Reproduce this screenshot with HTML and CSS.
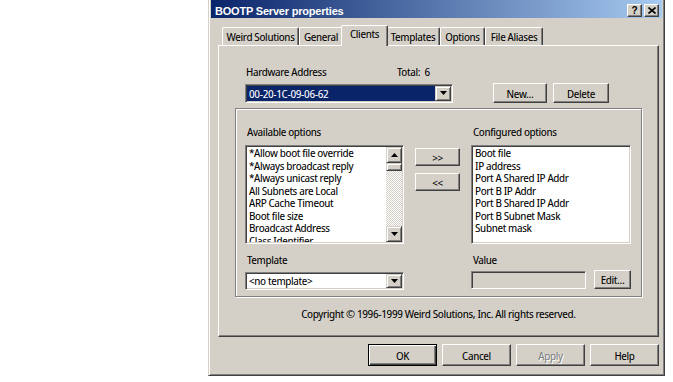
FILE: index.html
```html
<!DOCTYPE html>
<html>
<head>
<meta charset="utf-8">
<link rel="stylesheet" href="styles.css">
</head>
<body>
<div class="dialog">
  <div class="titlebar">
    <span class="title">BOOTP Server properties</span>
    <div class="caption-btns">
      <span class="cbtn help">?</span>
      <span class="cbtn close"><svg width="8" height="7" viewBox="0 0 8 7"><path d="M0.5 0.5L7.5 6.5M7.5 0.5L0.5 6.5" stroke="#000" stroke-width="1.6"/></svg></span>
    </div>
  </div>
  <div class="tabs">
    <span class="tab t-weird">Weird Solutions</span>
    <span class="tab t-general">General</span>
    <span class="tab t-clients active">Clients</span>
    <span class="tab t-templates">Templates</span>
    <span class="tab t-options">Options</span>
    <span class="tab t-aliases">File Aliases</span>
  </div>
  <div class="panel">
    <div class="hw">
      <div class="hw-labels"><span class="hw-label">Hardware Address</span><span>Total:&nbsp; 6</span></div>
      <div class="hw-controls">
        <div class="combo hw-combo">
          <span class="combo-text selected">00-20-1C-09-06-62</span>
          <span class="dropbtn"><svg width="7" height="4" viewBox="0 0 7 4"><path d="M0 0h7L3.5 4z"/></svg></span>
        </div>
        <button class="btn new">New...</button>
        <button class="btn delete">Delete</button>
      </div>
    </div>
    <div class="group">
      <div class="opts-row">
        <div class="col">
          <div class="label">Available options</div>
          <div class="listbox avail">
            <ul class="items">
              <li>*Allow boot file override</li>
              <li>*Always broadcast reply</li>
              <li>*Always unicast reply</li>
              <li>All Subnets are Local</li>
              <li>ARP Cache Timeout</li>
              <li>Boot file size</li>
              <li>Broadcast Address</li>
              <li>Class Identifier</li>
            </ul>
            <div class="scrollbar">
              <span class="sbtn"><svg width="7" height="4" viewBox="0 0 7 4"><path d="M0 4h7L3.5 0z"/></svg></span>
              <span class="thumb"></span>
              <span class="track"></span>
              <span class="sbtn"><svg width="7" height="4" viewBox="0 0 7 4"><path d="M0 0h7L3.5 4z"/></svg></span>
            </div>
          </div>
        </div>
        <div class="move">
          <button class="btn mbtn">&gt;&gt;</button>
          <button class="btn mbtn">&lt;&lt;</button>
        </div>
        <div class="col conf-col">
          <div class="label">Configured options</div>
          <div class="listbox conf">
            <ul class="items">
              <li>Boot file</li>
              <li>IP address</li>
              <li>Port A Shared IP Addr</li>
              <li>Port B IP Addr</li>
              <li>Port B Shared IP Addr</li>
              <li>Port B Subnet Mask</li>
              <li>Subnet mask</li>
            </ul>
          </div>
        </div>
      </div>
      <div class="fields-row">
        <div class="col">
          <div class="label">Template</div>
          <div class="combo tmpl-combo">
            <span class="combo-text">&lt;no template&gt;</span>
            <span class="dropbtn"><svg width="7" height="4" viewBox="0 0 7 4"><path d="M0 0h7L3.5 4z"/></svg></span>
          </div>
        </div>
        <div class="col value-col">
          <div class="label">Value</div>
          <div class="value-ctrls">
            <div class="edit-field"></div>
            <button class="btn edit-btn">Edit...</button>
          </div>
        </div>
      </div>
    </div>
    <div class="copyright">Copyright © 1996-1999 Weird Solutions, Inc. All rights reserved.</div>
  </div>
  <div class="buttons">
    <button class="btn dbtn default">OK</button>
    <button class="btn dbtn">Cancel</button>
    <button class="btn dbtn disabled">Apply</button>
    <button class="btn dbtn">Help</button>
  </div>
</div>
</body>
</html>
```

FILE: styles.css
```css
* { box-sizing: border-box; }

body {
  margin: 0;
  background: #fff;
  font-family: "Noto Sans Display", "Liberation Sans", Arial, sans-serif;
  font-stretch: 75%;
  font-size: 11.5px;
  letter-spacing: -0.35px;
  color: #000;
}

.dialog {
  margin-left: 208px;
  width: 457px;
  height: 376px;
  background: #d4d0c8;
  border-left: 1px solid #d4d0c8;
  border-right: 1px solid #404040;
  border-bottom: 1px solid #404040;
  box-shadow: inset 1px 0 #fff, inset -1px -1px #808080;
  padding: 0 2px 2px 2px;
}

.titlebar {
  height: 18px;
  display: flex;
  align-items: flex-start;
  justify-content: space-between;
  padding: 4px 3px 0 4px;
  background: linear-gradient(to right, #0a246a, #a6caf0);
}

.title {
  font-family: "Liberation Sans", Arial, sans-serif;
  font-stretch: normal;
  font-weight: bold;
  font-size: 11px;
  letter-spacing: -0.2px;
  line-height: 14px;
  color: #fff;
}

.caption-btns {
  display: flex;
  gap: 2px;
}

.cbtn {
  width: 15px;
  height: 13px;
  display: flex;
  align-items: center;
  justify-content: center;
  background: #d4d0c8;
  border: 1px solid;
  border-color: #fff #404040 #404040 #fff;
  box-shadow: inset -1px -1px #808080;
  font-family: "Liberation Sans", Arial, sans-serif;
  font-stretch: normal;
  letter-spacing: 0;
  font-weight: bold;
  font-size: 10px;
  line-height: 10px;
}

.tabs {
  display: flex;
  align-items: flex-end;
  height: 20px;
  margin-top: 7px;
  padding-left: 11px;
}

.tab {
  height: 18px;
  line-height: 17px;
  text-align: center;
  white-space: nowrap;
  border-top: 1px solid #fff;
  border-left: 1px solid #fff;
  border-right: 1px solid #404040;
  box-shadow: inset -1px 0 #808080;
  border-radius: 2px 2px 0 0;
  background: #d4d0c8;
}

.t-weird { width: 77px; }
.t-general { width: 44px; }
.t-clients { width: 43px; }
.t-templates { width: 54px; }
.t-options { width: 45px; }
.t-aliases { width: 58px; }

.tab.active {
  position: relative;
  z-index: 1;
  height: 21px;
  width: 47px;
  line-height: 16px;
  margin: 0 -2px -1px -2px;
}

.panel {
  margin-left: 7px;
  width: 441px;
  height: 292px;
  border: 1px solid;
  border-color: #fff #404040 #404040 #fff;
  box-shadow: inset -1px -1px #808080;
}

.hw {
  margin: 19px 0 0 26px;
}

.hw-labels {
  display: flex;
  height: 14px;
  line-height: 14px;
  padding-left: 1px;
}

.hw-label { width: 151px; }

.hw-controls {
  display: flex;
  align-items: center;
  margin-top: 4px;
}

.combo {
  display: flex;
  height: 19px;
  padding: 1px;
  background: #fff;
  border: 1px solid;
  border-color: #808080 #fff #fff #808080;
  box-shadow: inset 1px 1px #404040, inset -1px -1px #d4d0c8;
}

.hw-combo { width: 208px; }
.tmpl-combo { width: 159px; height: 18px; }

.combo-text {
  flex: 1;
  padding-left: 2px;
  line-height: 15px;
  white-space: nowrap;
  overflow: hidden;
}

.tmpl-combo .combo-text { line-height: 14px; }

.combo-text.selected {
  background: #0a246a;
  color: #fff;
}

.dropbtn,
.sbtn {
  width: 16px;
  display: flex;
  align-items: center;
  justify-content: center;
  background: #d4d0c8;
  border: 1px solid;
  border-color: #d4d0c8 #404040 #404040 #d4d0c8;
  box-shadow: inset 1px 1px #fff, inset -1px -1px #808080;
}

.btn {
  font: inherit;
  letter-spacing: inherit;
  color: #000;
  padding: 0;
  background: #d4d0c8;
  border: 1px solid;
  border-color: #fff #404040 #404040 #fff;
  box-shadow: inset -1px -1px #808080;
  text-align: center;
}

.new { margin-left: 40px; width: 54px; height: 20px; }
.delete { margin-left: 6px; width: 56px; height: 20px; }

.group {
  margin: 5px 0 0 16px;
  width: 407px;
  height: 189px;
  border: 1px solid #808080;
  box-shadow: inset 1px 1px #fff, 1px 1px #fff;
}

.opts-row {
  display: flex;
  margin-top: 16px;
  padding-left: 9px;
}

.label {
  height: 14px;
  line-height: 14px;
  padding-left: 2px;
  margin-bottom: 6px;
}

.listbox {
  height: 99px;
  padding: 1px 1px 1px 3px;
  background: #fff;
  border: 1px solid;
  border-color: #808080 #fff #fff #808080;
  box-shadow: inset 1px 1px #404040, inset -1px -1px #d4d0c8;
  overflow: hidden;
}

.avail {
  width: 159px;
  display: flex;
}

.conf { width: 160px; }

.items {
  flex: 1;
  margin: 0;
  padding: 0;
  list-style: none;
  line-height: 12.5px;
  white-space: nowrap;
  overflow: hidden;
}

.scrollbar {
  width: 16px;
  flex: none;
  display: flex;
  flex-direction: column;
}

.sbtn { height: 16px; flex: none; }

.thumb {
  height: 8px;
  flex: none;
  background: #d4d0c8;
  border: 1px solid;
  border-color: #d4d0c8 #404040 #404040 #d4d0c8;
  box-shadow: inset 1px 1px #fff, inset -1px -1px #808080;
}

.track {
  flex: 1;
  background: repeating-conic-gradient(#d4d0c8 0 25%, #fff 0 50%) 0 0 / 2px 2px;
}

.move {
  display: flex;
  flex-direction: column;
  gap: 7px;
  margin-left: 11px;
  padding-top: 23px;
}

.mbtn { width: 45px; height: 18px; }

.conf-col { margin-left: 11px; }

.fields-row {
  display: flex;
  margin-top: 9px;
  padding-left: 9px;
}

.fields-row .label { margin-bottom: 5px; }

.value-col { margin-left: 67px; }

.value-ctrls {
  display: flex;
  align-items: flex-end;
  margin-top: -2px;
}

.edit-field {
  width: 115px;
  height: 18px;
  background: #d4d0c8;
  border: 1px solid;
  border-color: #808080 #fff #fff #808080;
  box-shadow: inset 1px 1px #404040, inset -1px -1px #d4d0c8;
}

.edit-btn { margin-left: 8px; width: 37px; height: 19px; }

.copyright {
  margin-top: 10px;
  text-align: center;
  line-height: 14px;
}

.buttons {
  display: flex;
  justify-content: flex-end;
  gap: 5px;
  margin: 7px 3px 0 0;
}

.dbtn { width: 69px; height: 22px; }

.btn.default {
  border-color: #000;
  box-shadow: inset 1px 1px #fff, inset -1px -1px #404040, inset -2px -2px #808080;
}

.btn.disabled {
  color: #808080;
  text-shadow: 1px 1px #fff;
}
```
